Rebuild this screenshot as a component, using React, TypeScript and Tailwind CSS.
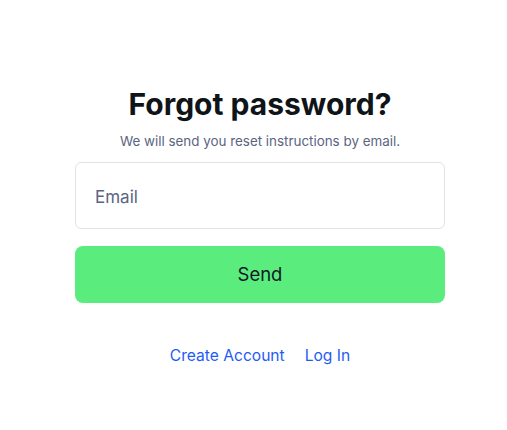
import React, { useState } from 'react';

const App: React.FC = () => {
  const [email, setEmail] = useState('');

  return (
    <div
      className="min-h-[430px] w-full bg-white flex justify-center pl-[13px] pt-[86px]"
      style={{ fontFamily: 'Inter, "Noto Sans", sans-serif' }}
    >
      <div className="w-[370px] flex flex-col items-center">
        <h1 className="text-[30px] leading-[36px] font-bold text-[#0f1419]">
          Forgot password?
        </h1>
        <p className="mt-[10px] text-[13.4px] leading-[18px] text-[#5a6582]">
          We will send you reset instructions by email.
        </p>

        <input
          type="email"
          value={email}
          onChange={(e) => setEmail(e.target.value)}
          placeholder="Email"
          className="mt-[12px] w-full h-[67px] rounded-md border border-[#dfe3ea] bg-white px-[19px] pt-[2px] text-[17px] text-[#1f2937] placeholder:text-[#5a6582] outline-none"
        />

        <button className="mt-[17px] w-full h-[57px] rounded-lg bg-[#5aed7e] text-[18.5px] text-[#111827]">
          Send
        </button>

        <div className="mt-[41px] flex items-center gap-[20px] text-[15.6px] text-[#1f5cf5]">
          <a href="#" className="hover:underline">Create Account</a>
          <a href="#" className="hover:underline">Log In</a>
        </div>
      </div>
    </div>
  );
};

export default App;
